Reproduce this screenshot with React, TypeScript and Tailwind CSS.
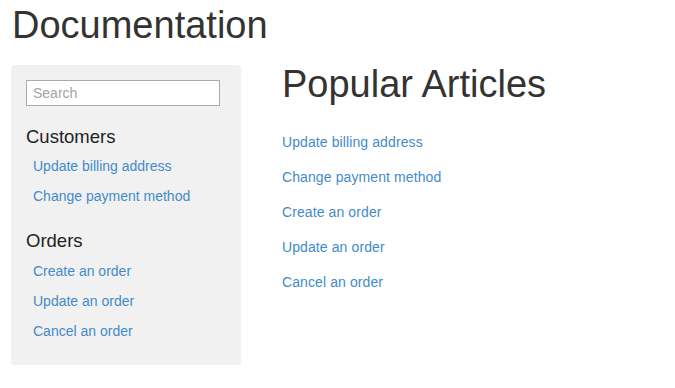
// Documentation landing: sidebar with search + grouped links, popular articles list

const SECTIONS = [
  {
    title: 'Customers',
    links: ['Update billing address', 'Change payment method'],
  },
  {
    title: 'Orders',
    links: ['Create an order', 'Update an order', 'Cancel an order'],
  },
];

const POPULAR = [
  'Update billing address',
  'Change payment method',
  'Create an order',
  'Update an order',
  'Cancel an order',
];

export default function App() {
  return (
    <div
      className="min-h-screen bg-white px-[11px] pt-[5px] text-[#333]"
      style={{ fontFamily: '"Liberation Sans", Arial, Helvetica, sans-serif' }}
    >
      <h1 className="ml-[1px] text-[38px] font-medium leading-[41.8px]">Documentation</h1>

      <div className="mt-[18px] flex items-start gap-[41px]">
        <aside className="w-[230px] rounded-[4px] bg-[#f1f1f1] px-[15px] pb-[19px] pt-[15px]">
          <input
            type="text"
            placeholder="Search"
            className="h-[26px] w-[194px] border border-[#aaa] bg-white px-[6px] text-[14px] text-[#333] outline-none placeholder:text-[#a3a3a3]"
          />

          {SECTIONS.map((section, i) => (
            <div key={section.title} className={i === 0 ? 'mt-[21px]' : 'mt-[20px]'}>
              <h3 className="text-[18.5px] font-medium leading-[20px] text-[#222]">{section.title}</h3>
              <ul className={i === 0 ? 'mt-[4px]' : 'mt-[5px]'}>
                {section.links.map((link) => (
                  <li key={link} className="py-[5px] pl-[7px] text-[14px] leading-[20px]">
                    <a href="#" className="text-[#428bca]">
                      {link}
                    </a>
                  </li>
                ))}
              </ul>
            </div>
          ))}
        </aside>

        <main className="-mt-[1px]">
          <h2 className="text-[38px] font-medium leading-[41.8px]">Popular Articles</h2>
          <ul className="mt-[26px] flex flex-col gap-[15px]">
            {POPULAR.map((link) => (
              <li key={link} className="text-[14px] leading-[20px] tracking-[0.1px]">
                <a href="#" className="text-[#428bca]">
                  {link}
                </a>
              </li>
            ))}
          </ul>
        </main>
      </div>
    </div>
  );
}
